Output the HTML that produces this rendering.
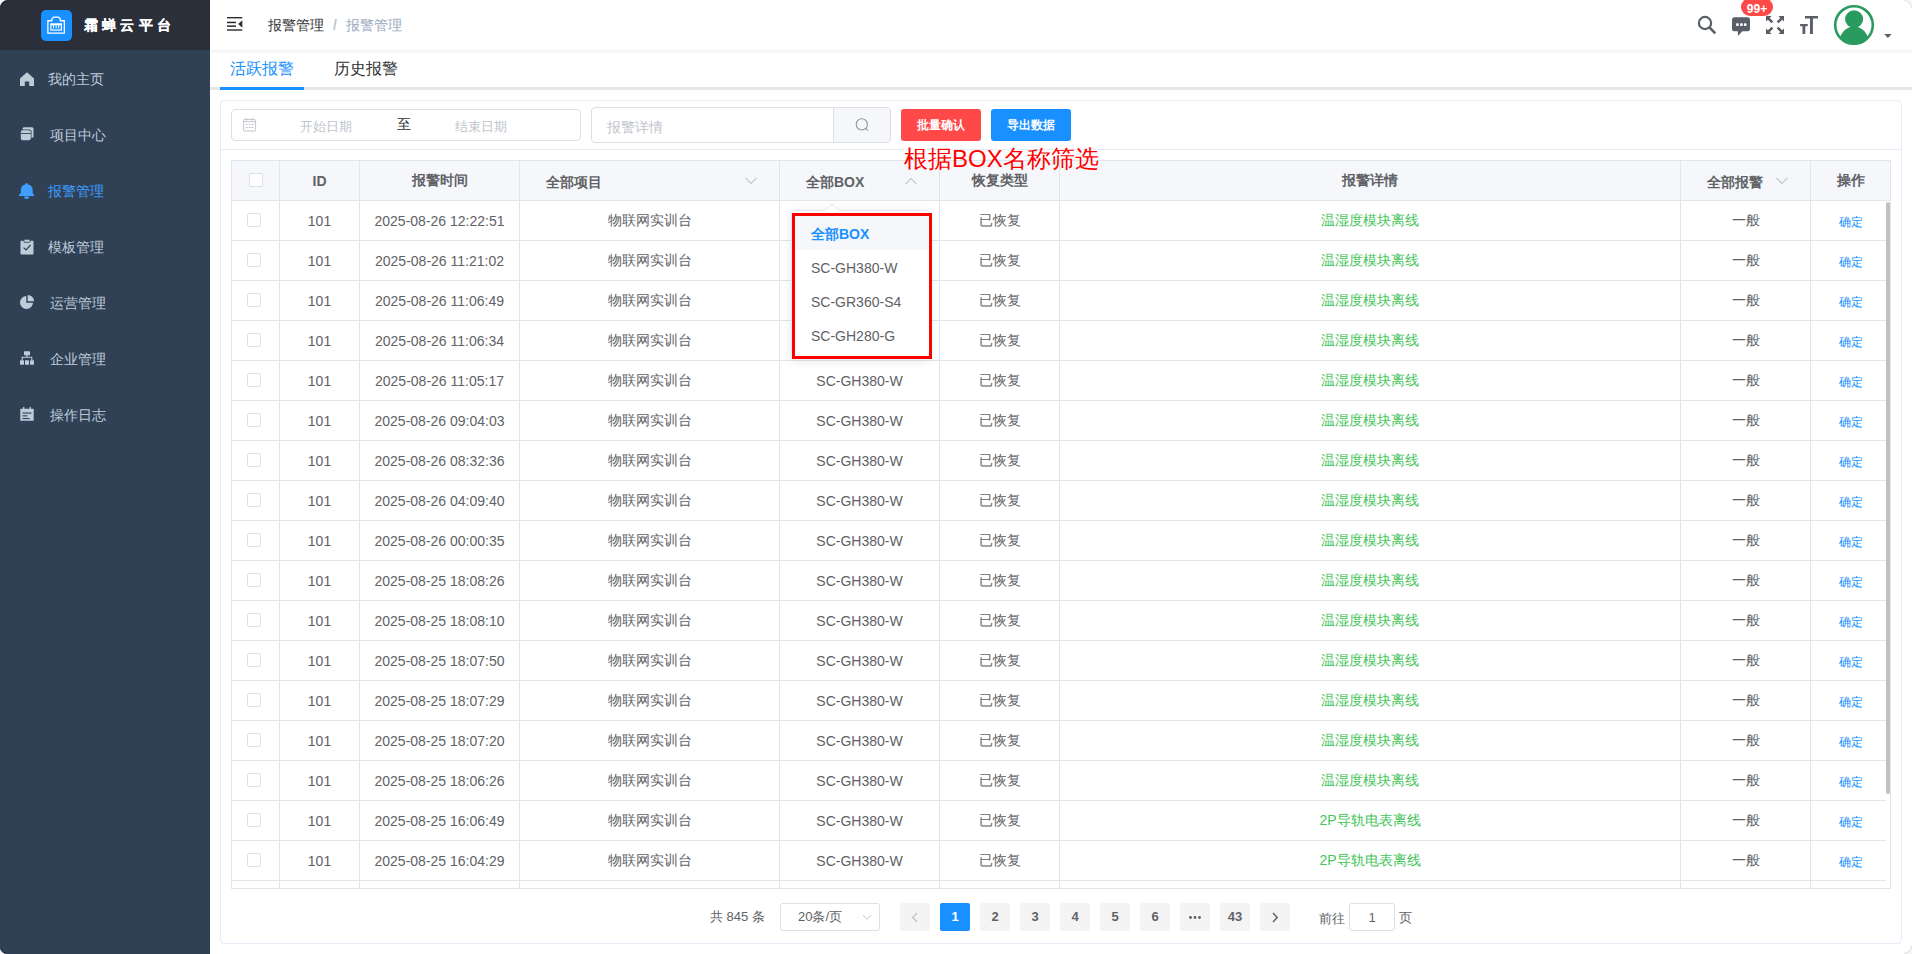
<!DOCTYPE html>
<html><head><meta charset="utf-8">
<style>
*{box-sizing:border-box;margin:0;padding:0}
html,body{width:1912px;height:954px;overflow:hidden;background:#fff;font-family:"Liberation Sans",sans-serif;color:#606266}
.a{position:absolute}
svg{display:block}
#side{position:absolute;left:0;top:0;width:210px;height:954px;background:#304156}
#logo{position:absolute;left:0;top:0;width:210px;height:50px;background:#2b2f3a}
#logo .ic{position:absolute;left:41px;top:10px;width:31px;height:31px;background:#1890ff;border-radius:5px}
#logo .t{position:absolute;left:84px;top:15px;font-size:14px;font-weight:bold;-webkit-text-stroke:0.15px #fff;color:#fff;letter-spacing:4.2px;line-height:20px;white-space:nowrap}
.mi{position:absolute;left:0;width:210px;height:56px;font-size:14px;color:#bfcbd9;line-height:56px;white-space:nowrap}
.mi .txt{position:absolute;top:0}
.mi svg{position:absolute}
#hdr{position:absolute;left:210px;top:0;width:1702px;height:50px;background:#fff;box-shadow:0 1px 4px rgba(0,21,41,.08)}
.bc{position:absolute;top:16px;font-size:14px;line-height:18px;white-space:nowrap}
#tabs{position:absolute;left:210px;top:51px;width:1702px;height:40px}
#tabs .tline{position:absolute;left:0;top:36px;width:1702px;height:3px;background:#e4e6ea}
#tabs .act{position:absolute;left:10px;top:36px;width:84px;height:3px;background:#1890ff}
.tab{position:absolute;top:8px;font-size:16px;line-height:20px;white-space:nowrap}
#card{position:absolute;left:220px;top:100px;width:1682px;height:844px;border:1px solid #e6ebf5;border-radius:4px;background:#fff}
#divline{position:absolute;left:221px;top:149px;width:1680px;height:1px;background:#e6ebf5}
.inp{position:absolute;border:1px solid #dcdfe6;border-radius:4px;background:#fff}
.ph{position:absolute;font-size:13px;color:#c0c4cc;line-height:16px;white-space:nowrap}
.btn{position:absolute;top:109px;width:80px;height:32px;border-radius:3px;color:#fff;font-size:12px;line-height:32px;text-align:center;font-weight:bold}
#note{position:absolute;left:904px;top:144px;font-size:24px;line-height:30px;color:#ff0000;white-space:nowrap}
#tblwrap{position:absolute;left:231px;top:160px;width:1660px;height:729px;overflow:hidden;border:1px solid #dfe6ec}
table{border-collapse:separate;border-spacing:0;table-layout:fixed}
#tblwrap td,#tblwrap th{border-right:1px solid #dfe6ec;border-bottom:1px solid #dfe6ec;height:40px;box-sizing:border-box;text-align:center;font-size:14px;color:#606266;white-space:nowrap;overflow:hidden;padding:0}
#tblwrap th{background:#f5f7fa;color:#606266;font-weight:bold;height:40px}
.cb{display:inline-block;width:14px;height:14px;border:1px solid #dcdfe6;border-radius:2px;background:#fff;vertical-align:middle}
.g{color:#45c45a!important}
.bl{color:#1890ff!important;font-size:12px!important}
.pg{position:absolute;top:903px;width:30px;height:28px;background:#f4f4f5;border-radius:2px;font-size:13px;font-weight:bold;color:#606266;text-align:center;line-height:28px}
</style></head><body>

<div id="side">
  <div id="logo"><div class="ic"><svg width="31" height="31" viewBox="0 0 31 31"><path d="M6.9 23.2 V10.75 H10.85 V9 L12.6 7.15 H17.6 L19.35 9 V10.75 H23.35 V23.2 Z" fill="none" stroke="#fff" stroke-width="1.3"/><rect x="9.9" y="13.9" width="10.5" height="6.1" fill="none" stroke="#fff" stroke-width="1.2"/><rect x="9.9" y="13.9" width="10.5" height="1.4" fill="#fff"/><path d="M12.6 14.5 V18.3 M15.15 14.5 V18.3 M17.7 14.5 V18.3" stroke="#fff" stroke-width="1"/></svg></div><div class="t">霜蝉云平台</div></div>
  <div class="mi" style="top:51px"><svg style="left:20px;top:21px" width="14" height="14" viewBox="0 0 14 14"><path d="M7 0.3 L14 6.6 V14 H9.2 V9.6 H4.8 V14 H0 V6.6 Z" fill="#bfcbd9"/></svg><span class="txt" style="left:48px">我的主页</span></div>
  <div class="mi" style="top:107px"><svg style="left:20px;top:20px" width="14" height="14" viewBox="0 0 14 14"><rect x="2.5" y="0.3" width="11" height="10.5" rx="1.5" fill="#bfcbd9"/><rect x="0" y="2.6" width="11.5" height="11.4" rx="2" fill="#304156"/><rect x="0.8" y="3.3" width="10" height="10" rx="1.8" fill="#bfcbd9"/><rect x="0.8" y="6" width="10" height="0.9" fill="#304156"/></svg><span class="txt" style="left:50px">项目中心</span></div>
  <div class="mi" style="top:163px;color:#409eff"><svg style="left:19px;top:19px" width="16" height="18" viewBox="0 0 16 18"><path d="M7.6 0.9 C8.3 0.9 8.6 1.5 8.7 2.3 C11.9 2.9 13.7 5.2 13.7 8.2 V11.6 L15.1 12.6 V13.9 H0 V12.6 L1.8 11.6 V8.2 C1.8 5.2 3.4 2.9 6.5 2.3 C6.6 1.5 6.9 0.9 7.6 0.9 Z M5 14.6 H10.2 A2.6 2.5 0 0 1 5 14.6 Z" fill="#409eff"/></svg><span class="txt" style="left:48px">报警管理</span></div>
  <div class="mi" style="top:219px"><svg style="left:20px;top:20px" width="14" height="16" viewBox="0 0 14 16"><rect x="0.5" y="1.8" width="13" height="13.6" rx="0.8" fill="#bfcbd9"/><rect x="4" y="0.3" width="6" height="3" rx="0.5" fill="#bfcbd9" stroke="#304156" stroke-width="0.8"/><path d="M3.6 8.6 L6 11 L10.6 6" fill="none" stroke="#304156" stroke-width="1.2"/></svg><span class="txt" style="left:48px">模板管理</span></div>
  <div class="mi" style="top:275px"><svg style="left:20px;top:20px" width="14" height="14" viewBox="0 0 14 14"><path d="M6.3 1 V7.7 H13 A6.5 6.5 0 1 1 6.3 1 Z" fill="#bfcbd9"/><path d="M7.7 0 A6.3 6.3 0 0 1 14 6.3 H7.7 Z" fill="#bfcbd9"/></svg><span class="txt" style="left:50px">运营管理</span></div>
  <div class="mi" style="top:331px"><svg style="left:20px;top:20px" width="14" height="14" viewBox="0 0 14 14"><rect x="4" y="0.2" width="6" height="4" rx="0.5" fill="#bfcbd9"/><path d="M7 3.9 V6.3 M2.2 9.5 V6.3 H11.8 V9.5" fill="none" stroke="#bfcbd9" stroke-width="1.1"/><rect x="0" y="9.3" width="4" height="4.4" rx="0.4" fill="#bfcbd9"/><rect x="5" y="9.3" width="4" height="4.4" rx="0.4" fill="#bfcbd9"/><rect x="10" y="9.3" width="4" height="4.4" rx="0.4" fill="#bfcbd9"/></svg><span class="txt" style="left:50px">企业管理</span></div>
  <div class="mi" style="top:387px"><svg style="left:20px;top:20px" width="14" height="14" viewBox="0 0 14 14"><rect x="0.3" y="1.8" width="13.4" height="12" rx="0.6" fill="#bfcbd9"/><rect x="3" y="0" width="1.4" height="3.2" fill="#bfcbd9"/><rect x="9.6" y="0" width="1.4" height="3.2" fill="#bfcbd9"/><rect x="2.5" y="5.5" width="9" height="1.1" fill="#304156"/><rect x="2.5" y="8.3" width="5" height="1.1" fill="#304156"/><rect x="2.5" y="11" width="7" height="1.1" fill="#304156"/></svg><span class="txt" style="left:50px">操作日志</span></div>
</div>

<div id="hdr">
  <svg class="a" style="left:17px;top:17px" width="16" height="14" viewBox="0 0 16 14"><rect x="0" y="0" width="15.3" height="1.4" fill="#2b2b2b"/><rect x="0" y="4.7" width="9" height="1.5" fill="#2b2b2b"/><rect x="0" y="8.4" width="9" height="1.5" fill="#2b2b2b"/><rect x="0" y="12.3" width="15.3" height="1.4" fill="#2b2b2b"/><path d="M15.3 3.2 V10.8 L11.2 7 Z" fill="#2b2b2b"/></svg>
  <div class="bc" style="left:58px;color:#303133">报警管理</div>
  <div class="bc" style="left:123px;color:#c0c4cc;font-weight:bold">/</div>
  <div class="bc" style="left:136px;color:#97a8be">报警管理</div>
</div>
<svg class="a" style="left:1696px;top:14px" width="22" height="22" viewBox="0 0 22 22"><circle cx="9" cy="9" r="6.1" fill="none" stroke="#5a5e66" stroke-width="2.2"/><path d="M13.5 13.5 L19.3 19.3" stroke="#5a5e66" stroke-width="2.5" stroke-linecap="butt"/></svg>
<svg class="a" style="left:1730px;top:15px" width="22" height="23" viewBox="0 0 22 23"><rect x="2" y="2.2" width="18" height="14" rx="2.5" fill="#5a5e66"/><path d="M7.8 16 H12.5 L8 21 Z" fill="#5a5e66"/><rect x="6.1" y="8.3" width="2.6" height="2.6" rx="0.6" fill="#fff"/><rect x="10.1" y="8.3" width="2.6" height="2.6" rx="0.6" fill="#fff"/><rect x="13.9" y="8.3" width="2.6" height="2.6" rx="0.6" fill="#fff"/></svg>
<div class="a" style="left:1741px;top:-2px;width:32px;height:18px;border-radius:9px;background:#ff4949;color:#fff;font-size:12px;line-height:23px;text-align:center;font-weight:bold">99+</div>
<svg class="a" style="left:1766px;top:16px" width="18" height="18" viewBox="0 0 18 18"><g fill="#5a5e66"><path d="M0 0 H5.6 L3.7 1.9 L7.3 5.5 L5.5 7.3 L1.9 3.7 L0 5.6 Z"/><path d="M0 0 H5.6 L3.7 1.9 L7.3 5.5 L5.5 7.3 L1.9 3.7 L0 5.6 Z" transform="translate(18,0) scale(-1,1)"/><path d="M0 0 H5.6 L3.7 1.9 L7.3 5.5 L5.5 7.3 L1.9 3.7 L0 5.6 Z" transform="translate(0,18) scale(1,-1)"/><path d="M0 0 H5.6 L3.7 1.9 L7.3 5.5 L5.5 7.3 L1.9 3.7 L0 5.6 Z" transform="translate(18,18) scale(-1,-1)"/></g></svg>
<svg class="a" style="left:1799px;top:16px" width="20" height="18" viewBox="0 0 20 18"><g fill="#5a5e66"><rect x="6" y="0" width="13" height="2.5"/><rect x="11" y="0" width="2.9" height="18"/><rect x="1.1" y="8" width="7.6" height="2.2"/><rect x="3.5" y="8" width="2.8" height="10"/></g></svg>
<svg class="a" style="left:1832px;top:3px" width="44" height="44" viewBox="0 0 44 44"><defs><clipPath id="avc"><circle cx="22" cy="22" r="19"/></clipPath></defs><circle cx="22" cy="22" r="18.8" fill="#fff" stroke="#2a9b5f" stroke-width="2.6"/><g clip-path="url(#avc)" fill="#2a9b5f"><ellipse cx="22.1" cy="16.1" rx="9.1" ry="8.8"/><ellipse cx="22" cy="40" rx="14.7" ry="16.5"/></g></svg>
<svg class="a" style="left:1884px;top:33px" width="8" height="6" viewBox="0 0 8 6"><path d="M0.2 1 H7.6 L3.9 5 Z" fill="#5a5e66"/></svg>

<div id="tabs">
  <div class="tline"></div><div class="act"></div>
  <div class="tab" style="left:20px;color:#1890ff">活跃报警</div>
  <div class="tab" style="left:124px;color:#303133">历史报警</div>
</div>

<div id="card"></div>
<div id="divline"></div>
<div class="inp" style="left:231px;top:109px;width:350px;height:32px"></div>
<svg class="a" style="left:243px;top:118px" width="14" height="14" viewBox="0 0 14 14"><rect x="0.6" y="1.6" width="12" height="11.4" rx="0.8" fill="none" stroke="#c0c4cc" stroke-width="1"/><rect x="0.6" y="3.2" width="12" height="1" fill="#c0c4cc"/><rect x="3" y="0" width="1" height="2.5" fill="#c0c4cc"/><rect x="9" y="0" width="1" height="2.5" fill="#c0c4cc"/><g fill="#c0c4cc"><rect x="2.6" y="6" width="2" height="1"/><rect x="5.6" y="6" width="2" height="1"/><rect x="8.6" y="6" width="2" height="1"/><rect x="2.6" y="9" width="2" height="1"/><rect x="5.6" y="9" width="2" height="1"/><rect x="8.6" y="9" width="2" height="1"/></g></svg>
<div class="ph" style="left:300px;top:119px">开始日期</div>
<div class="a" style="left:397px;top:115px;font-size:14px;line-height:18px;color:#303133">至</div>
<div class="ph" style="left:455px;top:119px">结束日期</div>
<div class="inp" style="left:591px;top:107px;width:300px;height:36px;overflow:hidden"><div class="a" style="left:241px;top:0;width:59px;height:36px;background:#f5f7fa;border-left:1px solid #dcdfe6"></div></div>
<div class="a" style="left:607px;top:118px;font-size:14px;line-height:18px;color:#c0c4cc">报警详情</div>
<svg class="a" style="left:854px;top:117px" width="16" height="16" viewBox="0 0 16 16"><circle cx="7.8" cy="7.4" r="5.6" fill="none" stroke="#909399" stroke-width="1.1"/><path d="M11.7 11.4 L13.8 13.6" stroke="#909399" stroke-width="1.1"/></svg>
<div class="btn" style="left:901px;background:#ff4949">批量确认</div>
<div class="btn" style="left:991px;background:#1890ff">导出数据</div>

<div id="tblwrap">
<table class="a" style="left:0;top:0;width:1658px"><colgroup><col style="width:48px"><col style="width:80px"><col style="width:160px"><col style="width:260px"><col style="width:160px"><col style="width:120px"><col style="width:621px"><col style="width:130px"><col style="width:79px"></colgroup>
<tr class="hr"><th><span class="cb" style="position:relative;top:-2px"></span></th><th>ID</th><th>报警时间</th><th style="text-align:left;padding-left:26px;padding-top:4px">全部项目</th><th style="text-align:left;padding-left:26px;padding-top:4px">全部BOX</th><th>恢复类型</th><th>报警详情</th><th style="text-align:left;padding-left:26px;padding-top:4px">全部报警</th><th style="border-right:0">操作</th></tr>
</table>
<table class="a" style="left:0;top:40px;width:1654px"><colgroup><col style="width:48px"><col style="width:80px"><col style="width:160px"><col style="width:260px"><col style="width:160px"><col style="width:120px"><col style="width:621px"><col style="width:130px"><col style="width:75px"></colgroup>
<tr><td><span class="cb" style="margin-left:-4px;position:relative;top:-2px"></span></td><td>101</td><td>2025-08-26 12:22:51</td><td>物联网实训台</td><td></td><td>已恢复</td><td class="g">温湿度模块离线</td><td>一般</td><td class="bl" style="border-right:0;padding-left:4px;padding-top:3px">确定</td></tr><tr><td><span class="cb" style="margin-left:-4px;position:relative;top:-2px"></span></td><td>101</td><td>2025-08-26 11:21:02</td><td>物联网实训台</td><td></td><td>已恢复</td><td class="g">温湿度模块离线</td><td>一般</td><td class="bl" style="border-right:0;padding-left:4px;padding-top:3px">确定</td></tr><tr><td><span class="cb" style="margin-left:-4px;position:relative;top:-2px"></span></td><td>101</td><td>2025-08-26 11:06:49</td><td>物联网实训台</td><td></td><td>已恢复</td><td class="g">温湿度模块离线</td><td>一般</td><td class="bl" style="border-right:0;padding-left:4px;padding-top:3px">确定</td></tr><tr><td><span class="cb" style="margin-left:-4px;position:relative;top:-2px"></span></td><td>101</td><td>2025-08-26 11:06:34</td><td>物联网实训台</td><td></td><td>已恢复</td><td class="g">温湿度模块离线</td><td>一般</td><td class="bl" style="border-right:0;padding-left:4px;padding-top:3px">确定</td></tr><tr><td><span class="cb" style="margin-left:-4px;position:relative;top:-2px"></span></td><td>101</td><td>2025-08-26 11:05:17</td><td>物联网实训台</td><td>SC-GH380-W</td><td>已恢复</td><td class="g">温湿度模块离线</td><td>一般</td><td class="bl" style="border-right:0;padding-left:4px;padding-top:3px">确定</td></tr><tr><td><span class="cb" style="margin-left:-4px;position:relative;top:-2px"></span></td><td>101</td><td>2025-08-26 09:04:03</td><td>物联网实训台</td><td>SC-GH380-W</td><td>已恢复</td><td class="g">温湿度模块离线</td><td>一般</td><td class="bl" style="border-right:0;padding-left:4px;padding-top:3px">确定</td></tr><tr><td><span class="cb" style="margin-left:-4px;position:relative;top:-2px"></span></td><td>101</td><td>2025-08-26 08:32:36</td><td>物联网实训台</td><td>SC-GH380-W</td><td>已恢复</td><td class="g">温湿度模块离线</td><td>一般</td><td class="bl" style="border-right:0;padding-left:4px;padding-top:3px">确定</td></tr><tr><td><span class="cb" style="margin-left:-4px;position:relative;top:-2px"></span></td><td>101</td><td>2025-08-26 04:09:40</td><td>物联网实训台</td><td>SC-GH380-W</td><td>已恢复</td><td class="g">温湿度模块离线</td><td>一般</td><td class="bl" style="border-right:0;padding-left:4px;padding-top:3px">确定</td></tr><tr><td><span class="cb" style="margin-left:-4px;position:relative;top:-2px"></span></td><td>101</td><td>2025-08-26 00:00:35</td><td>物联网实训台</td><td>SC-GH380-W</td><td>已恢复</td><td class="g">温湿度模块离线</td><td>一般</td><td class="bl" style="border-right:0;padding-left:4px;padding-top:3px">确定</td></tr><tr><td><span class="cb" style="margin-left:-4px;position:relative;top:-2px"></span></td><td>101</td><td>2025-08-25 18:08:26</td><td>物联网实训台</td><td>SC-GH380-W</td><td>已恢复</td><td class="g">温湿度模块离线</td><td>一般</td><td class="bl" style="border-right:0;padding-left:4px;padding-top:3px">确定</td></tr><tr><td><span class="cb" style="margin-left:-4px;position:relative;top:-2px"></span></td><td>101</td><td>2025-08-25 18:08:10</td><td>物联网实训台</td><td>SC-GH380-W</td><td>已恢复</td><td class="g">温湿度模块离线</td><td>一般</td><td class="bl" style="border-right:0;padding-left:4px;padding-top:3px">确定</td></tr><tr><td><span class="cb" style="margin-left:-4px;position:relative;top:-2px"></span></td><td>101</td><td>2025-08-25 18:07:50</td><td>物联网实训台</td><td>SC-GH380-W</td><td>已恢复</td><td class="g">温湿度模块离线</td><td>一般</td><td class="bl" style="border-right:0;padding-left:4px;padding-top:3px">确定</td></tr><tr><td><span class="cb" style="margin-left:-4px;position:relative;top:-2px"></span></td><td>101</td><td>2025-08-25 18:07:29</td><td>物联网实训台</td><td>SC-GH380-W</td><td>已恢复</td><td class="g">温湿度模块离线</td><td>一般</td><td class="bl" style="border-right:0;padding-left:4px;padding-top:3px">确定</td></tr><tr><td><span class="cb" style="margin-left:-4px;position:relative;top:-2px"></span></td><td>101</td><td>2025-08-25 18:07:20</td><td>物联网实训台</td><td>SC-GH380-W</td><td>已恢复</td><td class="g">温湿度模块离线</td><td>一般</td><td class="bl" style="border-right:0;padding-left:4px;padding-top:3px">确定</td></tr><tr><td><span class="cb" style="margin-left:-4px;position:relative;top:-2px"></span></td><td>101</td><td>2025-08-25 18:06:26</td><td>物联网实训台</td><td>SC-GH380-W</td><td>已恢复</td><td class="g">温湿度模块离线</td><td>一般</td><td class="bl" style="border-right:0;padding-left:4px;padding-top:3px">确定</td></tr><tr><td><span class="cb" style="margin-left:-4px;position:relative;top:-2px"></span></td><td>101</td><td>2025-08-25 16:06:49</td><td>物联网实训台</td><td>SC-GH380-W</td><td>已恢复</td><td class="g">2P导轨电表离线</td><td>一般</td><td class="bl" style="border-right:0;padding-left:4px;padding-top:3px">确定</td></tr><tr><td><span class="cb" style="margin-left:-4px;position:relative;top:-2px"></span></td><td>101</td><td>2025-08-25 16:04:29</td><td>物联网实训台</td><td>SC-GH380-W</td><td>已恢复</td><td class="g">2P导轨电表离线</td><td>一般</td><td class="bl" style="border-right:0;padding-left:4px;padding-top:3px">确定</td></tr><tr><td><span class="cb" style="margin-left:-4px;position:relative;top:-2px"></span></td><td>101</td><td></td><td>物联网实训台</td><td>SC-GH380-W</td><td>已恢复</td><td class="g"></td><td>一般</td><td class="bl" style="border-right:0;padding-left:4px;padding-top:3px">确定</td></tr>
</table>
<div class="a" style="left:1654px;top:41px;width:4px;height:592px;border-radius:2px;background:#c1c1c1"></div>
</div>
<svg class="a" style="left:745px;top:177px" width="12" height="8" viewBox="0 0 12 8"><path d="M0.4 0.8 L6 6.4 L11.6 0.8" fill="none" stroke="#c0c4cc" stroke-width="1.1"/></svg><svg class="a" style="left:1776px;top:177px" width="12" height="8" viewBox="0 0 12 8"><path d="M0.4 0.8 L6 6.4 L11.6 0.8" fill="none" stroke="#c0c4cc" stroke-width="1.1"/></svg><svg class="a" style="left:905px;top:177px" width="12" height="8" viewBox="0 0 12 8"><path d="M0.4 7.2 L6 1.6 L11.6 7.2" fill="none" stroke="#c0c4cc" stroke-width="1.1"/></svg>
<div class="a" style="left:791px;top:210px;width:139px;height:148px;background:#fff;border:1px solid #e4e7ed;border-radius:4px;box-shadow:0 2px 12px rgba(0,0,0,.1)"></div>
<svg class="a" style="left:824px;top:204px" width="16" height="8" viewBox="0 0 16 8"><path d="M0 7.5 L8 0.5 L16 7.5" fill="#fff" stroke="#e4e7ed" stroke-width="1"/><rect x="0" y="7" width="16" height="2" fill="#fff"/></svg>
<div class="a" style="left:795px;top:216px;width:133px;height:34px;background:#f5f7fa"></div>
<div class="a" style="left:811px;top:225px;font-size:14px;line-height:18px;font-weight:bold;color:#1890ff">全部BOX</div>
<div class="a" style="left:811px;top:259px;font-size:14px;line-height:18px;color:#606266">SC-GH380-W</div>
<div class="a" style="left:811px;top:293px;font-size:14px;line-height:18px;color:#606266">SC-GR360-S4</div>
<div class="a" style="left:811px;top:327px;font-size:14px;line-height:18px;color:#606266">SC-GH280-G</div>
<div class="a" style="left:792px;top:213px;width:140px;height:146px;border:3px solid #ff0000"></div>

<div class="a" style="left:710px;top:908px;font-size:13px;line-height:18px;color:#606266;white-space:nowrap">共 845 条</div>
<div class="inp" style="left:780px;top:903px;width:100px;height:28px;border-radius:3px"></div>
<div class="a" style="left:798px;top:908px;font-size:13px;line-height:18px;color:#606266;white-space:nowrap">20条/页</div>
<svg class="a" style="left:862px;top:914px" width="10" height="7" viewBox="0 0 10 7"><path d="M0.8 1 L5 5.2 L9.2 1" fill="none" stroke="#c0c4cc" stroke-width="1"/></svg>
<div class="pg" style="left:900px"><svg class="a" style="left:11px;top:9px" width="8" height="11" viewBox="0 0 8 11"><path d="M6 1 L1.8 5.5 L6 10" fill="none" stroke="#c0c4cc" stroke-width="1.5"/></svg></div>
<div class="pg" style="left:940px;background:#1890ff;color:#fff">1</div>
<div class="pg" style="left:980px">2</div>
<div class="pg" style="left:1020px">3</div>
<div class="pg" style="left:1060px">4</div>
<div class="pg" style="left:1100px">5</div>
<div class="pg" style="left:1140px">6</div>
<div class="pg" style="left:1180px"><svg class="a" style="left:9px;top:13px" width="12" height="3" viewBox="0 0 12 3"><circle cx="1.5" cy="1.5" r="1.4" fill="#606266"/><circle cx="6" cy="1.5" r="1.4" fill="#606266"/><circle cx="10.5" cy="1.5" r="1.4" fill="#606266"/></svg></div>
<div class="pg" style="left:1220px">43</div>
<div class="pg" style="left:1260px"><svg class="a" style="left:11px;top:9px" width="8" height="11" viewBox="0 0 8 11"><path d="M2 1 L6.2 5.5 L2 10" fill="none" stroke="#606266" stroke-width="1.5"/></svg></div>
<div class="a" style="left:1319px;top:910px;font-size:13px;line-height:18px;color:#606266">前往</div>
<div class="inp" style="left:1349px;top:903px;width:46px;height:28px;border-radius:3px;font-size:13px;line-height:28px;text-align:center;color:#606266">1</div>
<div class="a" style="left:1399px;top:909px;font-size:13px;line-height:18px;color:#606266">页</div>
<div id="note">根据BOX名称筛选</div>
<svg class="a" style="left:0;top:0" width="10" height="10" viewBox="0 0 10 10"><path d="M0 0 H8 A8 8 0 0 0 0 8 Z" fill="#f4f4f4"/><path d="M8 0.6 A7.4 7.4 0 0 0 0.6 8" fill="none" stroke="#1c2029" stroke-width="0.8"/></svg>
<svg class="a" style="left:0;top:944px" width="10" height="10" viewBox="0 0 10 10"><path d="M0 10 H7 A7 7 0 0 1 0 3 Z" fill="#f4f4f4"/><path d="M7 9.4 A6.4 6.4 0 0 1 0.6 3" fill="none" stroke="#1e2c40" stroke-width="0.8"/></svg>
<svg class="a" style="left:1902px;top:0" width="10" height="10" viewBox="0 0 10 10"><path d="M10 0 H2 A8 8 0 0 1 10 8 Z" fill="#f6f6f6"/><path d="M2 0.6 A7.4 7.4 0 0 1 9.4 8" fill="none" stroke="#e2e2e2" stroke-width="1"/></svg>
<svg class="a" style="left:1902px;top:944px" width="10" height="10" viewBox="0 0 10 10"><path d="M10 10 H2 A8 8 0 0 0 10 2 Z" fill="#f6f6f6"/><path d="M2 9.4 A7.4 7.4 0 0 0 9.4 2" fill="none" stroke="#d8d8d8" stroke-width="1"/></svg>
</body></html>
